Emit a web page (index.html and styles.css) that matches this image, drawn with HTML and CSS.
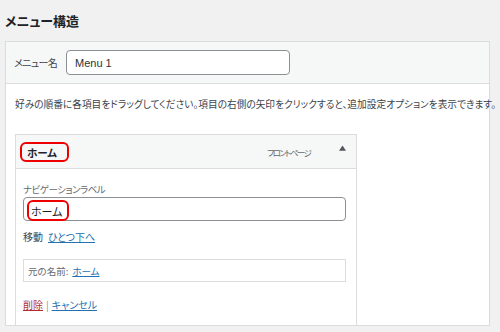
FILE: index.html
```html
<!DOCTYPE html>
<html lang="ja">
<head>
  <meta charset="UTF-8" />
  <title>メニュー構造</title>
  <link rel="stylesheet" href="styles.css">
</head>
<body>
  <h2 class="title">メニュー構造</h2>

  <div class="panel">
    <div class="panel-head">
      <label class="name-label">メニュー名</label>
      <div class="text-input name-input">Menu 1</div>
    </div>

    <div class="panel-body">
      <p class="hint">好みの順番に各項目をドラッグしてください。項目の右側の矢印をクリックすると、追加設定オプションを表示できます。</p>

      <!-- menu item -->
      <div class="item">
        <div class="item-head">
          <span class="mark item-title">ホーム</span>
          <span class="item-type">フロントページ</span>
          <svg class="toggle" viewBox="0 0 8 6"><polygon points="4,0 8,6 0,6"/></svg>
        </div>
        <div class="item-body">
          <div class="field-label">ナビゲーションラベル</div>
          <div class="text-input label-input"><span class="mark">ホーム</span></div>
          <div class="move">移動 <a href="#">ひとつ下へ</a></div>
          <div class="original">元の名前: <a href="#">ホーム</a></div>
          <div class="actions"><a href="#" class="delete">削除</a> | <a href="#">キャンセル</a></div>
        </div>
      </div>
    </div>
  </div>
</body>
</html>
```

FILE: styles.css
```css
:root {
  --font-jp: 'Noto Sans CJK JP', 'Noto Sans', sans-serif;
  --text: #3c434a;
  --heading: #1d2327;
  --border: #dcdcde;
  --head-bg: #f6f7f7;
  --link: #2271b1;
  --red: #e00;
}

body {
  margin: 0;
  background: #f1f1f1;
  font-family: var(--font-jp);
  font-feature-settings: "palt";
  color: var(--text);
  font-size: 10px;
}

a {
  color: var(--link);
}

.title {
  margin: 0;
  height: 41px;
  padding: 0 5px;
  display: flex;
  align-items: center;
  font-size: 13px;
  font-weight: bold;
  color: var(--heading);
}

.panel {
  margin: 0 10px 0 5px;
  background: #fff;
  border: 1px solid var(--border);
  box-shadow: 0 1px 1px rgba(0, 0, 0, 0.04);
}

.panel-head {
  height: 41px;
  background: var(--head-bg);
  border-bottom: 1px solid var(--border);
  display: flex;
  align-items: center;
  padding: 0 8px;
}

.name-label {
  font-size: 10px;
  letter-spacing: -0.6px;
  width: 52px;
}

.text-input {
  box-sizing: border-box;
  border: 1px solid #8c8f94;
  border-radius: 4px;
  background: #fff;
  display: flex;
  align-items: center;
  font-size: 11px;
  color: var(--heading);
}

.name-input {
  width: 224px;
  height: 25px;
  padding-left: 8px;
  font-family: 'Liberation Sans', sans-serif;
  color: #2c3338;
}

.panel-body {
  padding: 9px 0 0 9px;
}

.hint {
  margin: 0 0 19px;
  height: 22px;
  line-height: 22px;
  font-size: 9.7px;
  white-space: nowrap;
}

.item {
  width: 342px;
  box-sizing: border-box;
  border: 1px solid var(--border);
  border-bottom: none;
  height: 191px;
}

.item-head {
  height: 33px;
  background: var(--head-bg);
  border-bottom: 1px solid var(--border);
  display: flex;
  align-items: center;
  padding: 0 10px 0 4px;
}

.mark {
  border: 2px solid var(--red);
  border-radius: 6px;
  display: inline-flex;
  align-items: center;
  box-sizing: border-box;
}

.item-title {
  height: 20px;
  width: 49px;
  padding-left: 5px;
  margin-top: 1px;
  font-weight: bold;
  font-size: 10.5px;
  color: var(--heading);
}

.item-type {
  margin-left: auto;
  font-size: 8.5px;
  color: #646970;
  letter-spacing: -1.7px;
}

.toggle {
  width: 7px;
  height: 6px;
  margin-left: 29px;
  margin-bottom: 7px;
  fill: #50575e;
}

.item-body {
  padding: 12px 10px 0 7px;
}

.field-label {
  height: 16px;
  line-height: 16px;
  font-size: 9.5px;
  letter-spacing: -0.5px;
  color: #646970;
}

.label-input {
  height: 24px;
  padding-left: 3px;
}

.label-input .mark {
  height: 21px;
  width: 42px;
  margin-top: 3px;
  padding-left: 2px;
  font-size: 11px;
}

.move {
  height: 31px;
  display: flex;
  align-items: center;
  gap: 5px;
  font-size: 10px;
  padding-bottom: 1px;
  box-sizing: border-box;
}

.original {
  margin-top: 7px;
  height: 23px;
  box-sizing: border-box;
  border: 1px solid var(--border);
  display: flex;
  align-items: center;
  gap: 4px;
  padding-left: 4px;
  font-size: 9.5px;
  color: #646970;
}

.actions {
  height: 44px;
  display: flex;
  align-items: center;
  gap: 3px;
  font-size: 10px;
  color: #8c8f94;
}

.delete {
  color: #b32d2e;
}
```
